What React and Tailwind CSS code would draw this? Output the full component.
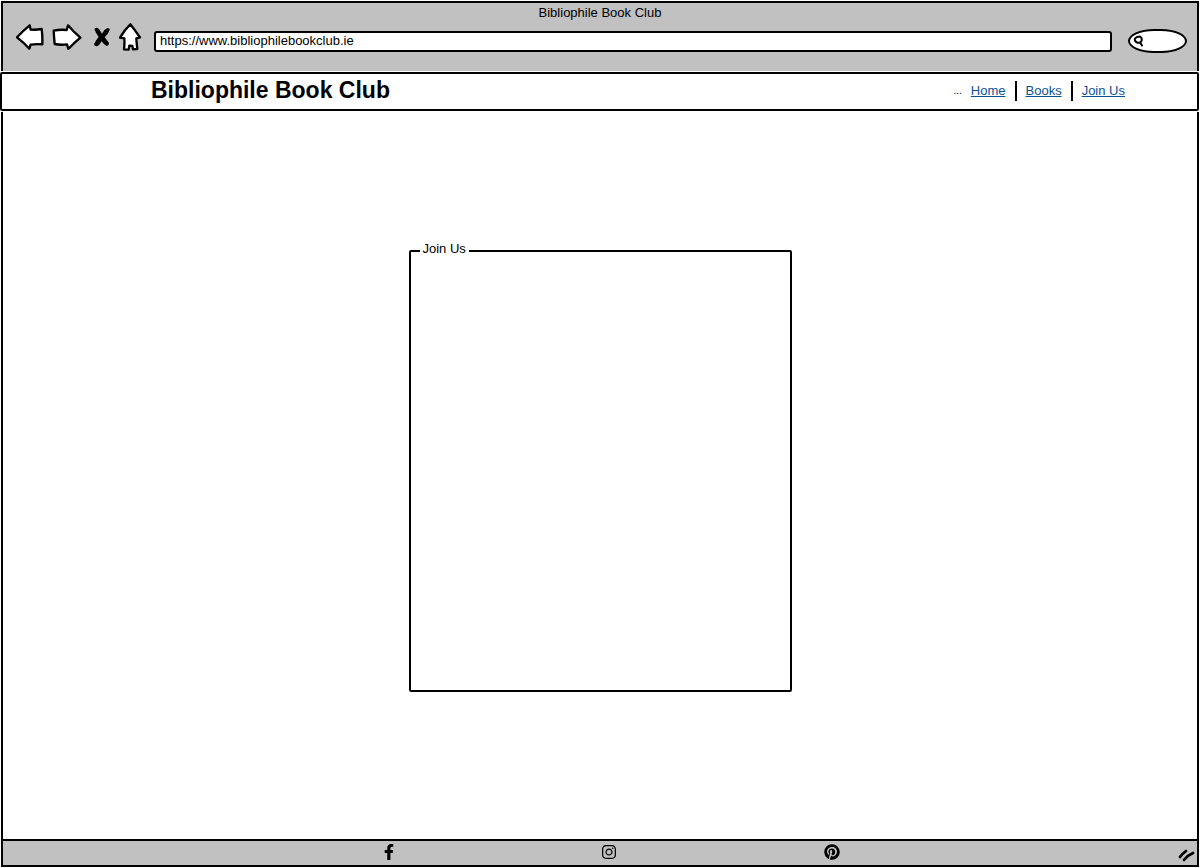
import { FaFacebookF, FaInstagram, FaPinterest } from "react-icons/fa";

const outline = {
  fill: "#fff",
  stroke: "#000",
  strokeWidth: 7,
  strokeLinejoin: "round",
  strokeLinecap: "round",
};

function BrowserButtons() {
  return (
    <div className="flex h-7 shrink-0 items-center gap-2">
      <button type="button" aria-label="Back">
        <svg className="block h-[26px] w-7" viewBox="48 27 84 78">
          <path {...outline} d="M51 67Q68 48 89 31L92 44Q110 45 125 42Q128 65 127 88Q110 86 92 89L88 101Q72 83 51 67Z" />
        </svg>
      </button>
      <button type="button" aria-label="Forward">
        <svg className="block h-[26px] w-[30px]" viewBox="156 27 90 78">
          <path {...outline} d="M161 47Q180 43 200 45L204 31Q221 51 241 68Q222 84 205 102L201 88Q182 91 164 87Q162 67 161 47Z" />
        </svg>
      </button>
      <button type="button" aria-label="Stop">
        <svg className="block h-5 w-5" viewBox="270 32 60 60">
          <path
            fill="#000"
            d="M283 38Q289 31 297 38L306 52Q312 39 322 35Q331 36 329 42Q324 54 314 63Q321 72 327 80Q327 88 319 89Q311 84 305 75Q299 87 291 90Q283 91 282 83Q287 72 296 62Q287 50 283 38Z"
          />
        </svg>
      </button>
      <button type="button" aria-label="Home page">
        <svg className="block h-7 w-6" viewBox="354 24 72 84">
          <path {...outline} d="M391 28Q405 46 420 67L409 70Q410 86 412 102L399 103L397 93L388 92L386 104L372 103Q374 87 373 70L360 68Q373 45 391 28Z" />
        </svg>
      </button>
    </div>
  );
}

function Toolbar() {
  return (
    <div className="mx-px h-[70px] border-2 border-b-0 border-black bg-[#c1c1c1]">
      <div className="text-center leading-5">Bibliophile Book Club</div>
      <div className="flex items-start pr-2.5 pl-[13px]">
        <BrowserButtons />
        <input
          aria-label="Address"
          type="text"
          defaultValue="https://www.bibliophilebookclub.ie"
          className="mt-2 ml-3 h-[21px] min-w-0 flex-1 rounded-[3px] border-2 border-black bg-white px-1 pb-0.5 outline-none"
        />
        <label className="mt-1.5 ml-4 flex h-6 w-[59px] shrink-0 items-center rounded-[26px/12px] border-2 border-black bg-white pl-[3px]">
          <svg className="h-3 w-3 shrink-0" viewBox="0 0 12 12" fill="none" stroke="#000" strokeWidth="2" strokeLinecap="round" strokeLinejoin="round">
            <path d="M4 2L7 1.500Q9.500 3 8.500 6Q7 8.500 4 7.500Q1 6 2 3.500ZM7.500 8L9 10.500" />
          </svg>
          <input aria-label="Search" type="text" className="w-full min-w-0 bg-transparent outline-none" />
        </label>
      </div>
    </div>
  );
}

const linkStyle = "text-[#0b5394] underline underline-offset-1";

export default function App() {
  return (
    <div className="flex min-h-screen flex-col bg-white py-px font-['Liberation_Sans',sans-serif] text-[13px] leading-5 text-black">
      <Toolbar />
      <header className="mt-px mr-px flex h-[39px] items-center justify-between rounded-[2px] border-2 border-black pr-[72px] pb-0.5 pl-[149px]">
        <h1 className="pb-0.5 text-[23px] leading-8 font-bold">Bibliophile Book Club</h1>
        <nav className="flex items-center gap-[9px]">
          <span className="text-[10px]">...</span>
          <a href="#home" className={linkStyle}>Home</a>
          <span className="h-5 w-0.5 bg-black" />
          <a href="#books" className={linkStyle}>Books</a>
          <span className="h-5 w-0.5 bg-black" />
          <a href="#join" className={linkStyle}>Join Us</a>
        </nav>
      </header>
      <main className="mx-px mt-px flex flex-1 items-center justify-center border-x-2 border-black pb-5">
        <fieldset className="h-[453px] w-full max-w-[383px] rounded-[2px] border-2 border-black">
          <legend className="ml-[9px] px-[3px] pb-1">Join Us</legend>
        </fieldset>
      </main>
      <footer className="relative mx-px flex h-7 items-center justify-center gap-[207px] border-2 border-black bg-[#c1c1c1] pb-0.5 pl-6">
        <a href="#facebook" aria-label="Facebook"><FaFacebookF className="h-4 w-2.5" /></a>
        <a href="#instagram" aria-label="Instagram"><FaInstagram className="h-4 w-4" /></a>
        <a href="#pinterest" aria-label="Pinterest"><FaPinterest className="h-4 w-4" /></a>
        <svg className="absolute right-0.5 bottom-0.5 h-4 w-5" viewBox="0 0 20 16" fill="none" stroke="#000" strokeLinecap="round">
          <path d="M5 10Q7 7 11 4M9 13Q13 8 18 6" strokeWidth="2.800" />
        </svg>
      </footer>
    </div>
  );
}
